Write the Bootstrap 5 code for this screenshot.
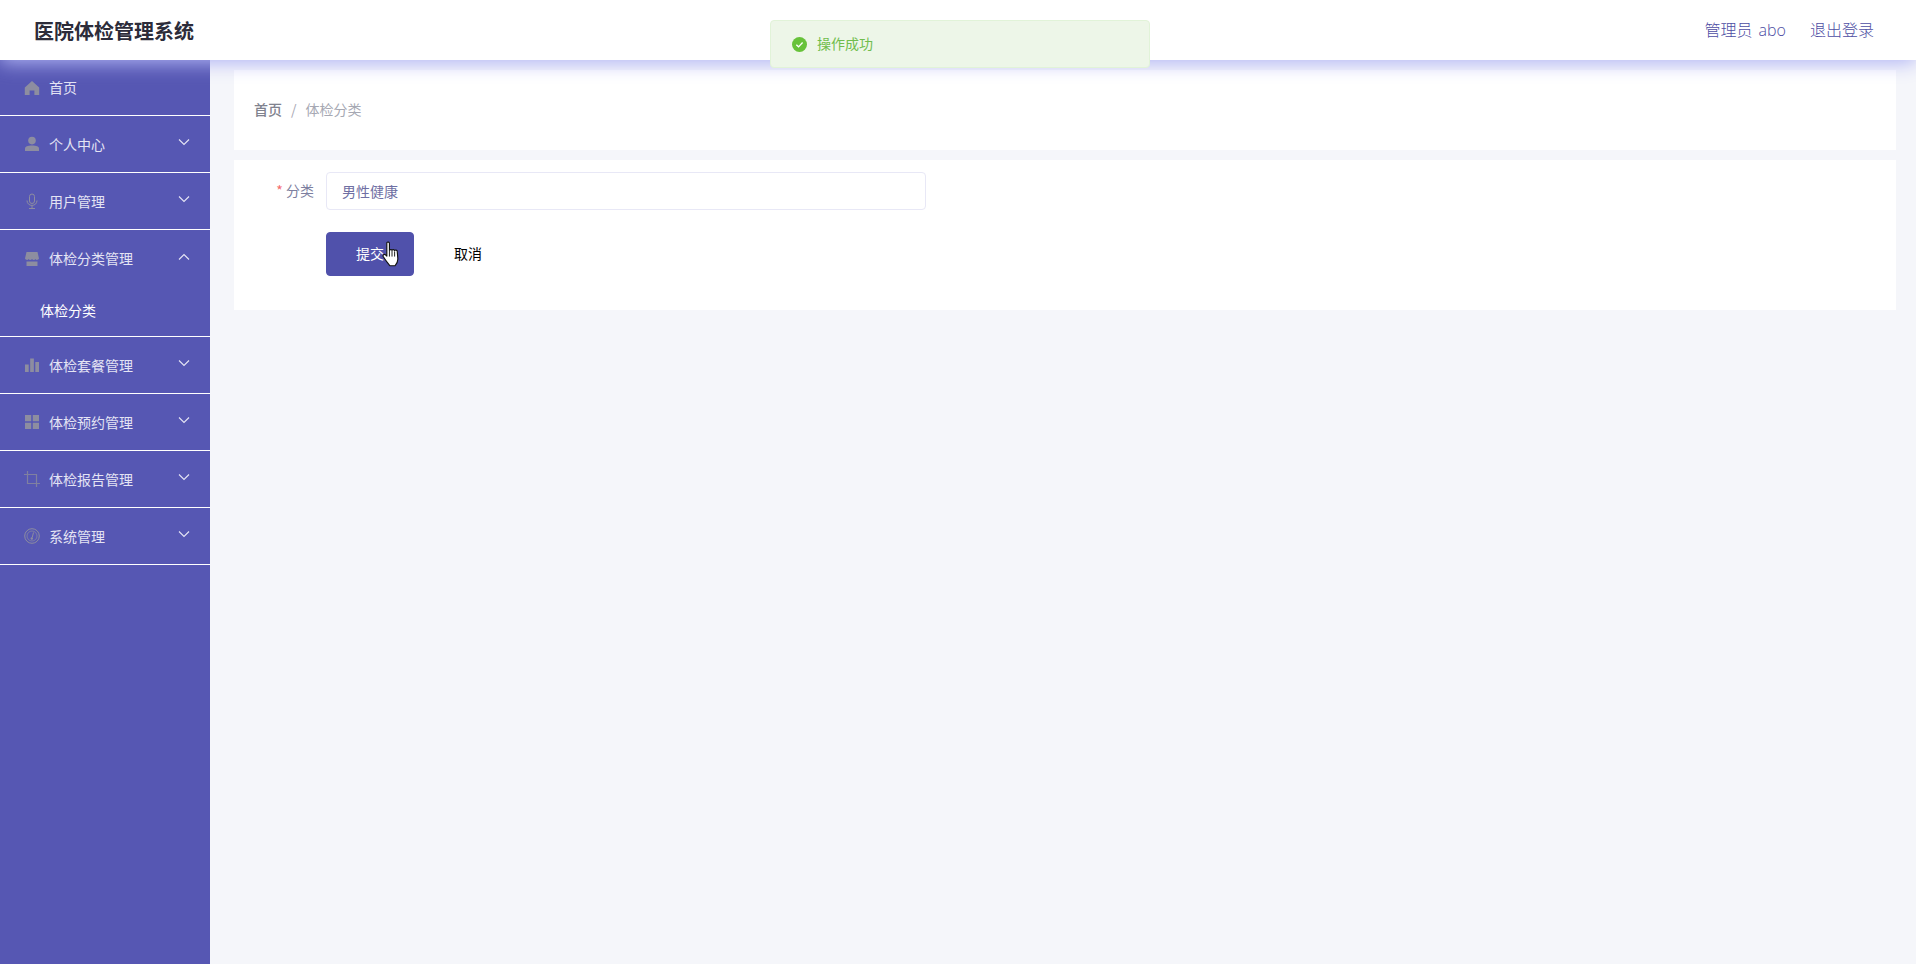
<!DOCTYPE html>
<html lang="zh-CN">
<head>
<meta charset="utf-8">
<title>医院体检管理系统</title>
<link href="https://cdn.jsdelivr.net/npm/bootstrap@5.3.0/dist/css/bootstrap.min.css" rel="stylesheet">
<style>
html,body{height:100%;margin:0;overflow:hidden}
body{font-family:"Noto Sans CJK SC","Liberation Sans",sans-serif;background:#f5f6fa;font-size:14px}
.top-bar{height:60px;background:#fff;box-shadow:0 3px 18px rgb(176,180,244);z-index:5;position:relative;padding:0 42px 0 34px}
.brand-name{font-size:20px;font-weight:700;color:#2c2c3a;padding-top:2px}
.top-link{font-size:16px;color:#4d4da3;font-weight:300;font-family:"Open Sans","Noto Sans CJK SC",sans-serif;margin-top:-1px;word-spacing:2px}
.page-body{height:calc(100% - 60px)}
.side-menu{width:210px;background:#5657b3;flex:none}
.menu-head{height:57px;padding:0 20px 0 24px;border-bottom:1px solid #fff;color:#e4e4f4;font-size:14px;gap:9px}
.menu-first{height:56px}
.menu-open{border-bottom:0}
.menu-ic{width:16px;height:16px;flex:none;fill:#8d8da0}
.menu-label{flex:1}
.menu-arrow{width:12px;height:12px;flex:none;stroke:#e6e6f5;fill:none;stroke-width:1.1;margin-top:-4px}
.menu-sub{height:50px;padding:0 0 3px 40px;color:#fff;font-size:14px;border-bottom:1px solid #fff}
.main-area{padding:10px 20px 0 24px;min-width:0}
.crumb-panel{height:80px;background:#fff;padding:0 20px;margin-bottom:10px}
.crumb-panel .breadcrumb{--bs-breadcrumb-margin-bottom:0;--bs-breadcrumb-divider-color:#a8a8b4;--bs-breadcrumb-item-padding-x:9px;font-size:14px;margin-top:-2px}
.crumb-first{color:#80828e;font-weight:500}
.crumb-now,.crumb-panel .breadcrumb-item.active{color:#a6a8b3}
.form-panel{height:150px;background:#fff;padding:12px 0 0}
.label-col{width:92px;font-size:14px;color:#7d7fa0;text-align:right;padding-right:12px;margin:0;line-height:36px;flex:none}
.req-star{color:#f56c6c}
.text-field{width:600px;height:38px;border:1px solid #e8e8f6;border-radius:4px;padding:0 15px;font-size:14px;color:#6f6fa3;background:#fff;box-shadow:none}
.text-field:focus{border-color:#e8e8f6;box-shadow:none;color:#6f6fa3}
.action-row{margin:22px 0 0 92px;gap:10px}
.btn-submit{width:88px;height:44px;background:#5051ab;border-color:#5051ab;color:#fff;font-size:14px;border-radius:4px;padding:0 0 2px}
.btn-cancel{width:88px;height:44px;color:#000;font-size:14px;border:0;padding:0 0 2px;background:#fff}
.toast-msg{position:absolute;left:770px;top:20px;width:380px;height:48px;background:#edf6e8;border:1px solid #e1f3d8;border-radius:4px;color:#70bd4c;font-size:14px;padding-left:21px;gap:10px;z-index:20}
.toast-msg span{margin-top:-2px}
.hand-cursor{position:absolute;left:381px;top:241px;width:21px;height:27px;z-index:30}
</style>
</head>
<body>
<header class="top-bar d-flex align-items-center justify-content-between">
  <div class="brand-name">医院体检管理系统</div>
  <div class="d-flex" style="gap:24px">
    <span class="top-link">管理员 abo</span>
    <span class="top-link">退出登录</span>
  </div>
</header>
<div class="toast-msg d-flex align-items-center" role="alert">
  <svg width="15" height="15" viewBox="0 0 16 16"><circle cx="8" cy="8" r="8" fill="#67c23a"/><path d="M4.6 8.2l2.4 2.3 4.3-4.6" fill="none" stroke="#fff" stroke-width="1.4"/></svg>
  <span>操作成功</span>
</div>
<div class="page-body d-flex">
  <nav class="side-menu">
    <div class="menu-head menu-first d-flex align-items-center">
      <svg class="menu-ic" viewBox="0 0 16 16"><path d="M8 1L.8 7.600V15h4.800v-4.600h4.800V15h4.800V7.600z"/></svg>
      <span class="menu-label">首页</span>
    </div>
    <div class="menu-head d-flex align-items-center">
      <svg class="menu-ic" viewBox="0 0 16 16"><circle cx="8" cy="4.600" r="3.800"/><path d="M1 15v-2.400C1 10.500 3.500 9.500 8 9.500s7 1 7 3.100V15z"/></svg>
      <span class="menu-label">个人中心</span>
      <svg class="menu-arrow" viewBox="0 0 12 12"><path d="M1 3.500l5 5 5-5"/></svg>
    </div>
    <div class="menu-head d-flex align-items-center">
      <svg class="menu-ic" viewBox="0 0 16 16"><rect x="5.500" y="1" width="5" height="9.500" rx="2.500" fill="none" stroke="#8d8da0"/><path d="M3 7.500c0 6.500 10 6.500 10 0M8 12.500V15M5 15.500h6" fill="none" stroke="#8d8da0"/></svg>
      <span class="menu-label">用户管理</span>
      <svg class="menu-arrow" viewBox="0 0 12 12"><path d="M1 3.500l5 5 5-5"/></svg>
    </div>
    <div class="menu-head menu-open d-flex align-items-center">
      <svg class="menu-ic" viewBox="0 0 16 16"><path d="M2.500 1h11L15 7.500c-1 1.800-3 1.800-3.500.5-.8 1.300-2.600 1.300-3.500 0-.9 1.300-2.700 1.300-3.500 0C4 9.300 2 9.300 1 7.500z"/><path d="M2.500 10.500h11V15h-11z"/></svg>
      <span class="menu-label">体检分类管理</span>
      <svg class="menu-arrow" viewBox="0 0 12 12"><path d="M1 8.500l5-5 5 5"/></svg>
    </div>
    <div class="menu-sub d-flex align-items-center"><span>体检分类</span></div>
    <div class="menu-head d-flex align-items-center">
      <svg class="menu-ic" viewBox="0 0 16 16"><path d="M1 7.500h3.700V15H1zM6.150 1.500h3.700V15h-3.700zM11.300 5H15v10h-3.700z"/></svg>
      <span class="menu-label">体检套餐管理</span>
      <svg class="menu-arrow" viewBox="0 0 12 12"><path d="M1 3.500l5 5 5-5"/></svg>
    </div>
    <div class="menu-head d-flex align-items-center">
      <svg class="menu-ic" viewBox="0 0 16 16"><path d="M1 1h6.200v6.200H1zM8.800 1H15v6.200H8.800zM1 8.800h6.200V15H1zM8.800 8.800H15V15H8.800z"/></svg>
      <span class="menu-label">体检预约管理</span>
      <svg class="menu-arrow" viewBox="0 0 12 12"><path d="M1 3.500l5 5 5-5"/></svg>
    </div>
    <div class="menu-head d-flex align-items-center">
      <svg class="menu-ic" viewBox="0 0 16 16"><path d="M3.500 0v12.500H16M0 3.500h12.500V16" fill="none" stroke="#8080a0" stroke-width="1.200"/></svg>
      <span class="menu-label">体检报告管理</span>
      <svg class="menu-arrow" viewBox="0 0 12 12"><path d="M1 3.500l5 5 5-5"/></svg>
    </div>
    <div class="menu-head d-flex align-items-center">
      <svg class="menu-ic" viewBox="0 0 16 16"><circle cx="8" cy="8" r="7.300" fill="none" stroke="#8d8da0"/><circle cx="8" cy="8" r="5" fill="none" stroke="#8d8da0" stroke-width=".7"/><path d="M9.500 4.500L8.200 9.500" stroke="#8d8da0" fill="none"/><circle cx="7.800" cy="10.500" r="1.200"/></svg>
      <span class="menu-label">系统管理</span>
      <svg class="menu-arrow" viewBox="0 0 12 12"><path d="M1 3.500l5 5 5-5"/></svg>
    </div>
  </nav>
  <main class="main-area flex-grow-1">
    <div class="crumb-panel d-flex align-items-center">
      <ol class="breadcrumb">
        <li class="breadcrumb-item crumb-first">首页</li>
        <li class="breadcrumb-item crumb-now active">体检分类</li>
      </ol>
    </div>
    <form class="form-panel">
      <div class="d-flex">
        <label class="label-col"><span class="req-star">*</span> 分类</label>
        <input class="form-control text-field" type="text" value="男性健康">
      </div>
      <div class="action-row d-flex">
        <button type="button" class="btn btn-primary btn-submit">提交</button>
        <button type="button" class="btn btn-cancel">取消</button>
      </div>
    </form>
  </main>
</div>
<svg class="hand-cursor" viewBox="0 0 20 26"><path d="M5.500 1.500c1-1 2.500-.5 2.500 1V9c.5-1 2.200-1 2.500 0 .5-1 2.200-1 2.500.2.600-.8 2.300-.6 2.500.6l.6 7c.2 3-1.500 5.700-2.600 7H8.500C7 22 4 18.500 2 15c-.7-1.500 1-2.700 2.200-1.700l1.300 1.200z" fill="#fff" stroke="#111" stroke-width="1.100" stroke-linejoin="round"/><path d="M8 9v6M10.500 9.500V15M13 10v5" stroke="#111" stroke-width=".9" fill="none"/></svg>
</body>
</html>
